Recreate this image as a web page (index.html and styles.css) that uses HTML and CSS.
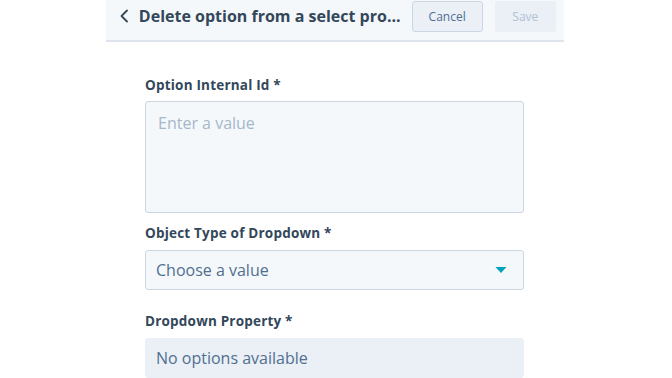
FILE: index.html
```html
<!DOCTYPE html>
<html lang="en">
<head>
    <meta charset="UTF-8">
    <title>Delete option from a select property</title>
    <link rel="stylesheet" href="styles.css">
</head>
<body>
    <div class="panel">
        <header class="panel-header">
            <button class="back" aria-label="Back">
                <svg width="12" height="14" viewBox="0 0 12 14"><path d="M8 1.5L2.5 7L8 12.5" fill="none" stroke="#33475b" stroke-width="1.8" stroke-linecap="round" stroke-linejoin="round"/></svg>
            </button>
            <h1 class="title">Delete option from a select pro...</h1>
            <button class="btn btn-cancel">Cancel</button>
            <button class="btn btn-save" disabled>Save</button>
        </header>

        <main class="form">
            <div class="field field-text">
                <label for="optionId">Option Internal Id *</label>
                <textarea id="optionId" placeholder="Enter a value"></textarea>
            </div>
            <div class="field field-type">
                <label>Object Type of Dropdown *</label>
                <div class="select">
                    <span>Choose a value</span>
                    <svg width="12" height="8" viewBox="0 0 12 8"><path d="M0.5 1h11L6 7z" fill="#00a4bd"/></svg>
                </div>
            </div>
            <div class="field">
                <label>Dropdown Property *</label>
                <div class="select disabled">
                    <span>No options available</span>
                </div>
            </div>
        </main>
    </div>
</body>
</html>
```

FILE: styles.css
```css
:root {
    --text-color: #33475b;
    --muted-color: #516f90;
    --border-color: #cbd6e2;
    --input-bg: #f5f8fa;
    --teal: #00a4bd;
}

* {
    margin: 0;
    padding: 0;
    box-sizing: border-box;
}

body {
    font-family: 'Open Sans', 'Noto Sans', sans-serif;
    background-color: #ffffff;
    color: var(--text-color);
    height: 378px;
    overflow: hidden;
}

.panel {
    width: 458px;
    margin-left: 106px;
}

.panel-header {
    display: flex;
    align-items: flex-start;
    height: 42px;
    background-color: var(--input-bg);
    border-bottom: 2px solid #dfe3eb;
    padding: 1px 8px 0 13px;
}

.back {
    background: none;
    border: none;
    width: 14px;
    height: 30px;
    display: flex;
    align-items: center;
    margin-right: 6px;
}

.title {
    font-size: 16px;
    font-weight: 700;
    line-height: 30px;
    color: var(--text-color);
    white-space: nowrap;
    margin-right: 11px;
}

.btn {
    font-family: inherit;
    font-size: 12px;
    height: 31px;
    border-radius: 3px;
}

.btn-cancel {
    width: 72px;
    background-color: #eaf0f6;
    border: 1px solid var(--border-color);
    color: #506e91;
    margin-right: 12px;
}

.btn-save {
    width: 62px;
    background-color: #eaf0f6;
    border: 1px solid #eaf0f6;
    color: #b0c1d4;
}

.form {
    padding: 34px 40px 0 39px;
}

.field label {
    display: block;
    font-size: 13.5px;
    font-weight: 700;
    line-height: 18px;
    margin-bottom: 7px;
    letter-spacing: 0.2px;
}

.field-text {
    margin-bottom: 11px;
}

.field-type {
    margin-bottom: 22px;
}

.field-type label,
.field-type + .field label {
    margin-bottom: 8px;
}

textarea {
    display: block;
    width: 379px;
    height: 112px;
    resize: none;
    font-family: inherit;
    font-size: 16px;
    padding: 10px 12px;
    background-color: var(--input-bg);
    border: 1px solid var(--border-color);
    border-radius: 3px;
    color: var(--text-color);
}

textarea::placeholder {
    color: #a5b7cb;
}

.select {
    width: 379px;
    height: 40px;
    display: flex;
    align-items: center;
    justify-content: space-between;
    padding: 0 16px 0 10px;
    font-size: 16px;
    color: var(--muted-color);
    background-color: var(--input-bg);
    border: 1px solid var(--border-color);
    border-radius: 3px;
}

.select.disabled {
    background-color: #eaf0f6;
    border-color: #eaf0f6;
}
```
